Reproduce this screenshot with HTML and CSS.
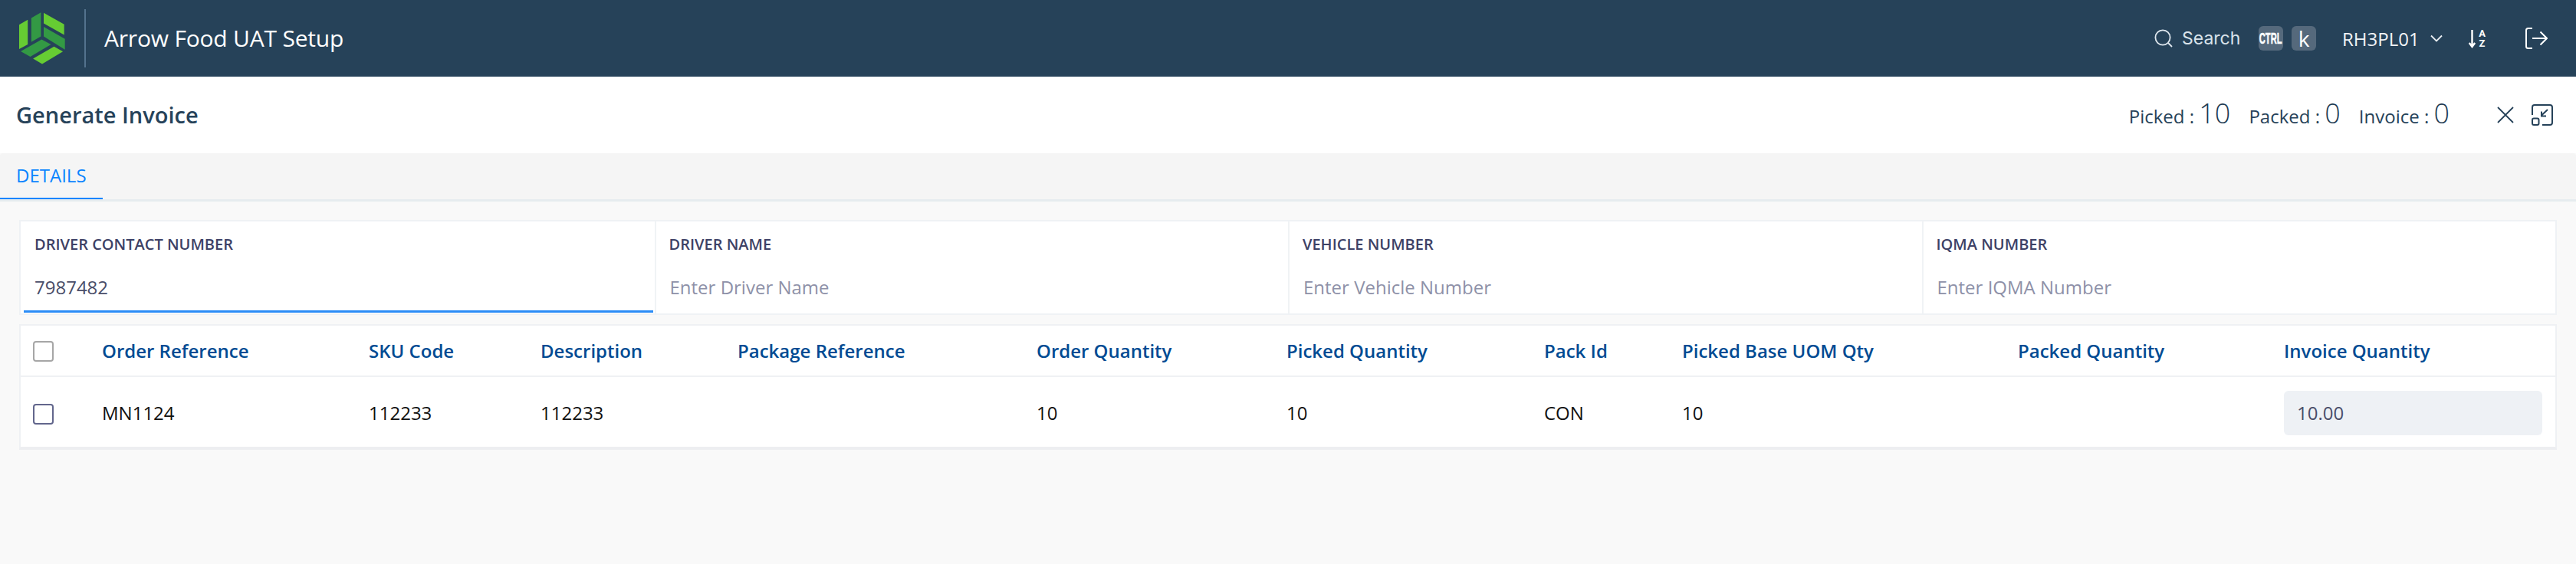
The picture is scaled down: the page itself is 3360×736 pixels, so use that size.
FILE: index.html
```html
<!DOCTYPE html>
<html lang="en">
<head>
<meta charset="utf-8">
<title>Generate Invoice</title>
<link rel="stylesheet" href="styles.css">
</head>
<body>
<header class="topbar">
  <svg class="logo" viewBox="44 33 182 205" aria-hidden="true">
    <polygon class="lt" points="44,82 78,62 78,160 44,178"/>
    <polygon class="dk" points="92,55 130,33 130,128 92,150"/>
    <polygon class="lt" points="141,35 222,80 222,122 141,76"/>
    <polygon class="dk" points="141,90 225,138 225,180 141,128"/>
    <polygon class="dk" points="133,140 170,160 88,208 50,187"/>
    <polygon class="lt" points="182,168 217,188 135,237 99,216"/>
  </svg>
  <div class="divider"></div>
  <div class="app-title">Arrow Food UAT Setup</div>
  <div class="top-actions">
    <svg class="ic-search" viewBox="0 0 24 24" aria-hidden="true"><circle cx="11" cy="11" r="9.6"/><path d="M18 18l5 5"/></svg>
    <span class="search-text">Search</span>
    <span class="key key-ctrl"><span>CTRL</span></span>
    <span class="key key-k">k</span>
    <span class="org">RH3PL01</span>
    <svg class="ic-chev" viewBox="0 0 16 10" aria-hidden="true"><path d="M1 1.5l7 7 7-7"/></svg>
    <svg class="ic-sort" viewBox="0 0 23 25" aria-hidden="true">
      <path d="M4.500 1v22M0.800 18L4.500 23l3.700-5"/>
      <text x="17.500" y="10">A</text>
      <text x="17.500" y="23">Z</text>
    </svg>
    <svg class="ic-logout" viewBox="0 0 29 28" aria-hidden="true"><path d="M9 1H3.500Q1 1 1 3.500v21Q1 27 3.500 27H9M9 14h19M19.500 5.500L28 14l-8.500 8.500"/></svg>
  </div>
</header>

<section class="page-head">
  <h1>Generate Invoice</h1>
  <div class="counts">
    <span class="count">Picked : <b>10</b></span>
    <span class="count">Packed : <b>0</b></span>
    <span class="count">Invoice : <b>0</b></span>
    <svg class="ic-close" viewBox="0 0 22 22" aria-hidden="true"><path d="M1 1l20 20M21 1L1 21"/></svg>
    <svg class="ic-collapse" viewBox="0 0 28 28" aria-hidden="true">
      <path d="M1 14V4Q1 1 4 1h20q3 0 3 3v20q0 3-3 3H14"/>
      <rect x="1" y="18.500" width="8.500" height="8.500" rx="2"/>
      <path d="M21 7l-8.500 8M13 9.500v6h6"/>
    </svg>
  </div>
</section>

<nav class="tabs"><span class="tab">DETAILS</span></nav>

<main class="content">
  <section class="form-grid">
    <div class="field active">
      <label>DRIVER CONTACT NUMBER</label>
      <div class="value">7987482</div>
    </div>
    <div class="field">
      <label>DRIVER NAME</label>
      <div class="value ph">Enter Driver Name</div>
    </div>
    <div class="field">
      <label>VEHICLE NUMBER</label>
      <div class="value ph">Enter Vehicle Number</div>
    </div>
    <div class="field">
      <label>IQMA NUMBER</label>
      <div class="value ph">Enter IQMA Number</div>
    </div>
  </section>

  <section class="table">
    <div class="row head">
      <div class="cell"><span class="check muted"></span></div>
      <div class="cell">Order Reference</div>
      <div class="cell">SKU Code</div>
      <div class="cell">Description</div>
      <div class="cell">Package Reference</div>
      <div class="cell">Order Quantity</div>
      <div class="cell">Picked Quantity</div>
      <div class="cell">Pack Id</div>
      <div class="cell">Picked Base UOM Qty</div>
      <div class="cell">Packed Quantity</div>
      <div class="cell">Invoice Quantity</div>
    </div>
    <div class="row body">
      <div class="cell"><span class="check"></span></div>
      <div class="cell">MN1124</div>
      <div class="cell">112233</div>
      <div class="cell">112233</div>
      <div class="cell"></div>
      <div class="cell">10</div>
      <div class="cell">10</div>
      <div class="cell">CON</div>
      <div class="cell">10</div>
      <div class="cell"></div>
      <div class="cell"><div class="qty">10.00</div></div>
    </div>
  </section>
</main>
</body>
</html>
```

FILE: styles.css
```css
* { box-sizing: border-box; }
html, body { margin: 0; height: 736px; overflow: hidden; }
body {
  background: #f9f9f9;
  font-family: "Open Sans", "Noto Sans", sans-serif;
  font-size: 24px;
}

.topbar {
  height: 100px;
  background: #264259;
  display: flex;
  align-items: center;
  padding-left: 25px;
  color: #fff;
}
.logo { width: 60px; height: 68px; flex: none; }
.lt { fill: #66cc33; }
.dk { fill: #339944; }
.divider { width: 2px; height: 76px; background: #54738e; margin-left: 25px; }
.app-title { font-size: 30px; margin-left: 24px; line-height: 40px; letter-spacing: -0.2px; }

.top-actions { margin-left: auto; display: flex; align-items: center; padding-right: 37px; }
.top-actions svg { fill: none; flex: none; }
.ic-search { width: 24px; height: 24px; stroke: #dfe7ee; stroke-width: 1.8; }
.search-text { font-family: "Inter", sans-serif; font-size: 23px; color: #d9e2ea; margin-left: 12px; width: 100px; }
.key {
  width: 32px; height: 32px; border-radius: 6px; background: #55697c;
  display: flex; align-items: center; justify-content: center; color: #fff;
}
.key-ctrl { font-family: "Liberation Sans", sans-serif; font-weight: 700; font-size: 20px; }
.key-ctrl span { display: block; transform: scaleX(0.56); white-space: nowrap; -webkit-text-stroke: 0.5px #fff; }
.key-k { margin-left: 11px; font-size: 28px; line-height: 32px; }
.org { margin-left: 34px; font-size: 24px; width: 97px; color: #f1f4f7; }
.ic-chev { width: 16px; height: 10px; margin-left: 18px; stroke: #e8edf2; stroke-width: 1.8; }
.ic-sort { width: 23px; height: 25px; margin-left: 34px; stroke: #fff; stroke-width: 2.4; }
.ic-sort text { fill: #fff; stroke: none; font-family: "Roboto", sans-serif; font-weight: 700; font-size: 13px; text-anchor: middle; }
.ic-logout { width: 29px; height: 28px; margin-left: 51px; stroke: #fff; stroke-width: 2; }

.page-head {
  height: 100px;
  background: #fff;
  display: flex;
  align-items: center;
  justify-content: space-between;
  padding: 0 30px 0 21px;
  color: #264259;
}
h1 { margin: 0; font-size: 29px; font-weight: 600; line-height: 40px; }
.counts { display: flex; align-items: center; }
.count { margin-right: 24px; line-height: 44px; white-space: nowrap; }
.count b { font-size: 36px; font-weight: 300; color: #1d3a52; }
.count:last-of-type { margin-right: 25px; }
.ic-close { width: 22px; height: 22px; margin-left: 37px; fill: none; stroke: #264259; stroke-width: 1.8; flex: none; }
.ic-collapse { width: 28px; height: 28px; margin-left: 23px; fill: none; stroke: #264259; stroke-width: 2; flex: none; }

.tabs {
  height: 63px;
  background: #f5f5f5;
  border-bottom: 3px solid #e6ecef;
  border-radius: 4px 4px 0 0;
}
.tab {
  display: block;
  width: 134px;
  height: 60px;
  padding: 13px 0 0 21px;
  line-height: 32px;
  color: #0a84ff;
  border-bottom: 2px solid #0a84ff;
  font-weight: 500;
}

.content { padding: 24px 25px 0; }
.form-grid {
  display: grid;
  grid-template-columns: repeat(4, 1fr);
  height: 124px;
  border: 2px solid #eff2f5;
  background: #fff;
}
.field { padding: 16px 20px 0 17px; border-left: 2px solid #f0f3f5; }
.field:first-child { border-left: 0; }
.field.active { border-bottom: 3px solid #2a8cf7; margin: 0 2px 1px 4px; padding-left: 14px; }
label { display: block; font-size: 20px; font-weight: 600; line-height: 28px; color: #3d4166; }
.value { margin-top: 25px; line-height: 34px; color: #4a4e69; }
.ph { color: #8e91a8; padding-left: 1px; }

.table {
  margin-top: 12px;
  height: 164px;
  background: #fff;
  border: 2px solid #eff1f4;
  border-bottom: 4px solid #edeef1;
}
.row {
  display: grid;
  grid-template-columns: 106px 348px 224px 257px 390px 326px 336px 180px 438px 347px 1fr;
  align-items: center;
}
.head { height: 67px; border-bottom: 2px solid #eff1f4; color: #004b93; font-weight: 600; }
.body { height: 91px; padding-top: 3px; color: #111; }
.cell { line-height: 32px; white-space: nowrap; min-width: 0; }
.check {
  display: block; width: 27px; height: 27px; margin: 2px 0 0 16px;
  border: 2px solid #62668c; border-radius: 4px; background: #fff;
}
.check.muted { border-color: #a6a6a6; }
.qty {
  height: 58px; width: 337px; padding-left: 17px;
  line-height: 58px; background: #eef1f5; border-radius: 6px; color: #4a4e69;
}
```
